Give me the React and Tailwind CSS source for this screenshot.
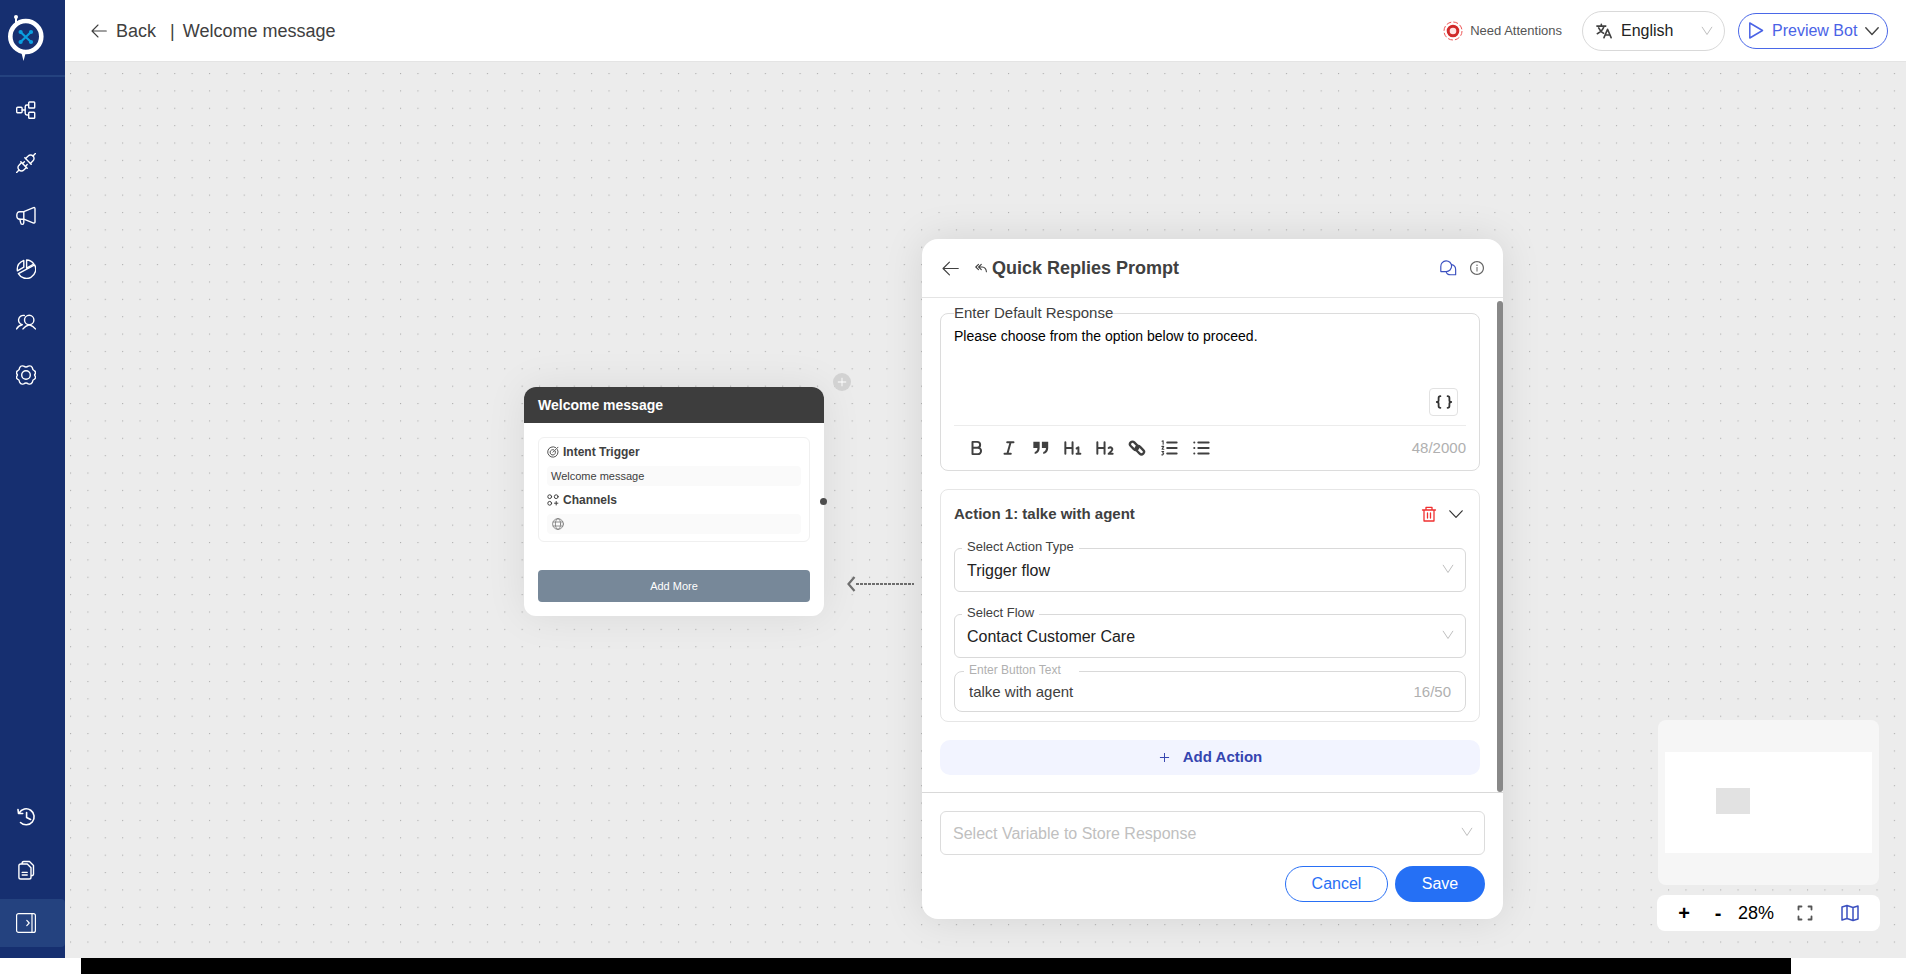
import { AiOutlineInfoCircle, AiOutlinePlus } from "react-icons/ai";

const stroke = {
    fill: "none",
    stroke: "currentColor",
    strokeLinecap: "round",
    strokeLinejoin: "round",
};

function Icon({ size = 20, width = 1.3, box = "0 0 20 20", className, children }) {
    return (
        <svg
            {...stroke}
            width={size}
            height={size}
            viewBox={box}
            strokeWidth={width}
            className={className}
            aria-hidden="true"
        >
            {children}
        </svg>
    );
}

function BackArrow({ size = 16 }) {
    return (
        <Icon size={size} width={1.1} box="0 0 16 16">
            <path d="M15.300 8H1M7 2L1 8l6 6" />
        </Icon>
    );
}

function Chevron({ size = 14, width = 1.2, className }) {
    return (
        <Icon size={size} width={width} box="0 0 14 14" className={className}>
            <path d="M.8 3.800L7 10.400l6.200-6.600" />
        </Icon>
    );
}

function Caret({ className }) {
    return (
        <svg {...stroke} width="12" height="12" viewBox="0 0 12 12" stroke="#bfbfbf" aria-hidden="true" className={`pointer-events-none ${className}`}>
            <path d="M1.200 2.200L6 9.500l4.800-7.300" />
        </svg>
    );
}

function Logo() {
    return (
        <svg width="36" height="46" viewBox="0 0 36 46" aria-hidden="true">
            <circle cx="8" cy="2" r="2" fill="#fff" />
            <path d="M7 2h2v8H7z" fill="#fff" />
            <path d="M13 35h6l-1.500 3.500-2 7.500-2-8z" fill="#fff" />
            <circle cx="17.800" cy="21.500" r="15.500" fill="#183070" stroke="#fff" strokeWidth="4.600" />
            <path d="M13 17.500l9.500 9M22.500 17.500L13 26.500" stroke="#0a9fe0" strokeWidth="2.200" />
            <g fill="#0a9fe0">
                <circle cx="12.600" cy="17" r="2.100" />
                <circle cx="23" cy="17" r="2.100" />
                <circle cx="12.600" cy="27" r="2.100" />
                <circle cx="23" cy="27" r="2.100" />
            </g>
        </svg>
    );
}

const topNav = [
    {
        label: "Flows",
        art: (
            <>
                <rect x="0.700" y="7.300" width="5.400" height="5.400" rx="1" />
                <rect x="12.700" y="2" width="6" height="6" rx="0.800" />
                <rect x="12.700" y="12.200" width="6" height="6" rx="0.800" />
                <path d="M6.200 10h3M12.500 5h-1.600q-1.700 0-1.700 1.700v6.600q0 1.700 1.700 1.700h1.600" />
            </>
        ),
    },
    {
        label: "Integrations",
        art: (
            <>
                <path d="M.6 19.400l2.400-2.400M19.400.6L17 3M4.800 8.800l6.400 6.400M8.800 4.800l6.400 6.400" />
                <path d="M5.600 9.600L3 12.200a3.300 3.300 0 0 0 0 4.800 3.300 3.300 0 0 0 4.800 0l2.600-2.600M9.600 5.600L12.200 3a3.300 3.300 0 0 1 4.800 0 3.300 3.300 0 0 1 0 4.800l-2.600 2.600" />
                <path d="M6.600 10.600l1.800-1.800M9.400 13.400l1.800-1.800" />
            </>
        ),
    },
    {
        label: "Campaigns",
        art: (
            <>
                <path d="M7.800 5.700l9.200-3.900q2-.8 2 .9v13.200q0 1.700-2 .9l-9.200-3.600H3.800Q.8 13.200.8 9.400t3-3.700z" />
                <path d="M7.800 5.700v10.800q0 1.900-1.500 1.900T4.700 16.800l-.8-3.500" />
            </>
        ),
    },
    {
        label: "Analytics",
        art: (
            <>
                <path d="M7.800 1.400v6.800L1.400 11.800Q.4 4.500 7.800 1.400z" />
                <path d="M10.600 1v8.200l7.200-4.200A9 9 0 0 0 10.600 1z" />
                <path d="M2.400 14.600l16.200-8.800a9 9 0 1 1-16.200 8.800z" />
            </>
        ),
    },
    {
        label: "Contacts",
        art: (
            <>
                <circle cx="13.200" cy="8" r="4.700" />
                <path d="M7 16.900q2.300-3.200 6.200-4.200 3.900 1 6.200 4.200M8.300 3.500a4.700 4.700 0 1 0-2 9.200Q2.500 13.500.6 16.900" />
            </>
        ),
    },
    {
        label: "Settings",
        art: (
            <>
                <circle cx="10" cy="10" r="4.300" />
                <path d="M7.700 1.200q2.300 1.500 4.600 0 2.800-1 4 1.400.3 2.800 2.200 3.300 1.900 1.600.4 3.400-.6.700 0 1.400 1.500 1.800-.4 3.400-1.900.5-2.200 3.300-1.200 2.400-4 1.400-2.300-1.500-4.600 0-2.800 1-4-1.400-.3-2.800-2.200-3.300-1.900-1.600-.4-3.400.6-.7 0-1.400Q-.4 7.500 1.500 5.900q1.900-.5 2.200-3.300 1.200-2.400 4-1.400z" />
            </>
        ),
    },
];

function NavButton({ label, children, className = "h-[53px]" }) {
    return (
        <button
            type="button"
            aria-label={label}
            className={`flex w-full items-center pl-4 text-white ${className}`}
        >
            {children}
        </button>
    );
}

function Sidebar() {
    return (
        <nav className="flex w-[65px] shrink-0 flex-col bg-[#162f70] pb-[11px]">
            <a href="#home" aria-label="Home" className="flex h-[77px] items-start border-b-2 border-[#24427f] pl-2 pt-[15px]">
                <Logo />
            </a>
            <div className="mt-[6px]">
                {topNav.map((item) => (
                    <NavButton key={item.label} label={item.label}>
                        <Icon width={1.4}>{item.art}</Icon>
                    </NavButton>
                ))}
            </div>
            <div className="mt-auto">
                <NavButton label="History">
                    <Icon width={1.6}>
                        <path d="M4.500 15.500a8 8 0 1 0-1.300-9.700M2 2.600l.5 3.900h4.200M10.600 5.500v5l4 2" />
                    </Icon>
                </NavButton>
                <NavButton label="Documents">
                    <Icon width={1.4}>
                        <path d="M4.700 4h6.600l3.700 3.700v9.500q0 1.800-1.800 1.800H4.700q-1.800 0-1.800-1.800V5.800Q2.900 4 4.700 4zM6 3.800q0-2.300 1.800-2.300h5.700l4 4V14q0 1.700-2.200 1.700M6.200 12.400h5M6.200 15h5" />
                    </Icon>
                </NavButton>
                <NavButton label="Expand menu" className="mt-[3px] h-12 rounded-r-sm bg-[#24427f]">
                    <Icon width={1.2}>
                        <rect x="0.600" y="0.600" width="18.800" height="18.800" rx="2" />
                        <path d="M16 .6v18.800M10.800 7.400l2.400 2.600-2.400 2.600" />
                    </Icon>
                </NavButton>
            </div>
        </nav>
    );
}

function Header() {
    return (
        <header className="flex h-[62px] shrink-0 items-center border-b border-[#e4e4e4] bg-white pl-[26px] pr-[18px] text-[#404040]">
            <a href="#back" className="flex items-center gap-[9px] text-lg">
                <BackArrow />
                Back
            </a>
            <span className="ml-[14px] text-lg">|</span>
            <h1 className="ml-2 text-lg">Welcome message</h1>

            <div className="ml-auto flex items-center">
                <svg width="20" height="20" viewBox="0 0 20 20" aria-hidden="true">
                    <circle cx="10" cy="10" r="9" fill="none" stroke="#ee5555" strokeWidth="1" strokeDasharray="5 2.070" />
                    <circle cx="10" cy="10" r="4.800" fill="#ffe3e3" stroke="#d02a2a" strokeWidth="3" />
                </svg>
                <span className="ml-[7px] text-[13px] text-[#555]">Need Attentions</span>
                <div className="relative ml-5 h-10 w-[143px] text-[#222]">
                    <Icon size={16} width={1.8} box="0 0 18 18" className="absolute left-[14px] top-3 text-[#404040]">
                        <path d="M1 3.500h10M6 1.500v2M9 3.700Q7.500 9 1.500 12M3 5.500q2 4.500 5.500 6M9 16.500l4-9.500 4 9.500M10.500 13.500h5" />
                    </Icon>
                    <select
                        aria-label="Language"
                        className="h-full w-full appearance-none rounded-full border border-[#d9d9d9] pl-[38px] text-base"
                    >
                        <option>English</option>
                    </select>
                    <Caret className="absolute right-3 top-[14px]" />
                </div>
                <button
                    type="button"
                    className="ml-[13px] flex h-9 w-[150px] items-center rounded-full border border-[#4a68e8] pl-[9px] text-base text-[#4a63e6]"
                >
                    <Icon size={17} width={1.5} box="0 0 17 17">
                        <path d="M1.800 1v15l12.700-7.500z" />
                    </Icon>
                    <span className="ml-[7px]">Preview Bot</span>
                    <Chevron width={1.4} className="ml-2 text-[#444]" />
                </button>
            </div>
        </header>
    );
}

function Dots() {
    return (
        <svg className="absolute inset-0 h-full w-full" aria-hidden="true">
            <defs>
                <pattern id="dots" x="5" y="11" width="17.370" height="17.370" patternUnits="userSpaceOnUse">
                    <circle cx="0.600" cy="0.600" r="0.600" fill="#a0a0a0" />
                </pattern>
            </defs>
            <rect width="100%" height="100%" fill="url(#dots)" />
        </svg>
    );
}

function WelcomeNode() {
    return (
        <section className="absolute left-[459px] top-[325px] w-[300px] rounded-xl bg-white shadow-[0_0_40px_rgba(0,0,0,0.08)]">
            <h2 className="flex h-9 items-center rounded-t-xl bg-[#3d3d3d] px-[14px] text-sm font-bold text-white">
                Welcome message
            </h2>
            <div className="p-[14px]">
                <div className="rounded-md border border-[#f0f0f0] px-2 pb-[7px] pt-1 text-[#404040]">
                    <h3 className="flex h-5 items-center gap-1 text-xs font-bold">
                        <Icon size={12} width={0.9} box="0 0 12 12">
                            <path d="M8.600 1.500a5.200 5.200 0 1 0 2 2.200M6.800 3.800a2.700 2.700 0 1 0 1.500 1.500M6 6.200l5-5" />
                        </Icon>
                        Intent Trigger
                    </h3>
                    <p className="my-1 h-5 rounded bg-[#fafafa] px-1 text-[11px]/5">Welcome message</p>
                    <h3 className="flex h-5 items-center gap-1 text-xs font-bold">
                        <Icon size={12} width={1} box="0 0 12 12">
                            <circle cx="2.700" cy="2.700" r="1.900" />
                            <circle cx="9.200" cy="2.700" r="1.900" />
                            <circle cx="2.700" cy="9.300" r="1.900" />
                            <path d="M9.200 7.500v3.500M7.500 9.200h3.400" />
                        </Icon>
                        Channels
                    </h3>
                    <p className="mt-1 flex h-5 items-center rounded bg-[#fafafa] px-[5px] text-[#777]">
                        <Icon size={12} width={0.8} box="0 0 12 12">
                            <circle cx="6" cy="6" r="5.400" />
                            <ellipse cx="6" cy="6" rx="2.600" ry="5.400" />
                            <path d="M1.200 4h9.600M1.200 8h9.600" />
                        </Icon>
                    </p>
                </div>
                <button type="button" className="mt-7 h-8 w-full rounded bg-[#778899] text-[11px] text-white">
                    Add More
                </button>
            </div>
            <span className="absolute -right-[3px] top-[111px] size-[7px] rounded-full bg-[#4d4d4d]" />
        </section>
    );
}

function FieldLabel({ htmlFor, className, children }) {
    return (
        <label htmlFor={htmlFor} className={`absolute bg-white ${className}`}>
            {children}
        </label>
    );
}

function SelectField({ id, label, value }) {
    return (
        <div className="relative">
            <FieldLabel htmlFor={id} className="-top-[9px] left-2 px-[5px] text-[13px]/4 text-[#404040]">
                {label}
            </FieldLabel>
            <select id={id} className="h-11 w-full appearance-none rounded-md border border-[#d9d9d9] px-3 pt-px text-base text-[#222]">
                <option>{value}</option>
            </select>
            <Caret className="absolute right-3 top-[15px]" />
        </div>
    );
}

const tools = [
    {
        label: "Bold",
        art: <path d="M5 3.200h5.200a3.300 3.300 0 0 1 0 6.600H5zM5 9.800h6a3.500 3.500 0 0 1 0 7H5z" />,
    },
    { label: "Italic", art: <path d="M8 3.500h7M5 16.500h7M11.800 3.500l-3.600 13" /> },
    {
        label: "Quote",
        art: (
            <g fill="currentColor" stroke="none">
                <path d="M1.500 3h7v7Q8.500 15.500 3 16.700v-2.200Q6 13.500 6 10H1.500zM11 3h7v7q0 5.500-5.500 6.700v-2.200q3-1 3-4.500h-4.500z" />
            </g>
        ),
    },
    {
        label: "Heading 1",
        art: <path d="M1.500 3.500v13M9.500 3.500v13M1.500 10h8M14 10.500l2-1.300v7.300M14 16.500h4.200" />,
    },
    {
        label: "Heading 2",
        art: <path d="M1.500 3.500v13M9.500 3.500v13M1.500 10h8M14 10q2-1.400 3.500 0t-.5 3.500l-3 3h4.500" />,
    },
    {
        label: "Link",
        art: (
            <g strokeWidth="2.600">
                <rect x="1.500" y="4.700" width="10.500" height="5.600" rx="2.800" transform="rotate(45 6.700 7.500)" />
                <rect x="8" y="9.700" width="10.500" height="5.600" rx="2.800" transform="rotate(45 13.200 12.500)" />
            </g>
        ),
    },
    {
        label: "Numbered list",
        art: (
            <>
                <path d="M8 4h10.500M8 10h10.500M8 16h10.500" />
                <path strokeWidth="1.200" d="M2.300 2.500l1.200-.6v3.800M2.100 8.200h2L2.300 11.300h2M2.100 13.900h2l-1.100 1.500 1.100 1-1.100 1.200h-1" />
            </>
        ),
    },
    {
        label: "Bulleted list",
        art: <path d="M7 4h11.500M7 10h11.500M7 16h11.500M2.500 4h.1M2.500 10h.1M2.500 16h.1" />,
    },
];

function ResponseEditor() {
    return (
        <div className="relative rounded-lg border border-[#dcdcdc] px-[13px] pt-3">
            <FieldLabel htmlFor="response" className="-top-[11px] left-[13px] text-[15px]/5 text-[#404040]">
                Enter Default Response
            </FieldLabel>
            <textarea
                id="response"
                defaultValue="Please choose from the option below to proceed."
                className="block h-[99px] w-full resize-none text-sm/5 text-black outline-none"
            />
            <button
                type="button"
                aria-label="Insert variable"
                className="absolute right-[21px] top-[74px] flex h-7 w-[29px] items-center justify-center rounded border border-[#e2e2e2] bg-white text-[#333]"
            >
                <Icon size={18} width={2}>
                    <path d="M6 3.500q-2 0-2 2V8q0 2-2 2 2 0 2 2v2.500q0 2 2 2M14 3.500q2 0 2 2V8q0 2 2 2-2 0-2 2v2.500q0 2-2 2" />
                </Icon>
            </button>
            <div className="flex h-[45px] items-center border-t border-[#ececec] pl-[14px] text-[#404040]">
                <div className="flex gap-[14px]">
                    {tools.map((tool) => (
                        <button key={tool.label} type="button" aria-label={tool.label}>
                            <Icon size={18} width={2.2}>{tool.art}</Icon>
                        </button>
                    ))}
                </div>
                <span className="ml-auto text-[15px] text-[#b0b0b0]">48/2000</span>
            </div>
        </div>
    );
}

function ActionCard() {
    return (
        <div className="mt-[18px] rounded-lg border border-[#e6e6e6] px-[13px] pb-[9px]">
            <div className="flex h-12 items-center pr-[3px]">
                <h3 className="flex-1 text-[15px] font-bold text-[#404040]">Action 1: talke with agent</h3>
                <button type="button" aria-label="Delete action" className="text-[#f03030]">
                    <Icon size={16} width={1.3} box="0 0 16 16">
                        <path d="M1.500 4h13M5 4V1.300h6V4M3 4v11h10V4M6.500 7v5M9.500 7v5" />
                    </Icon>
                </button>
                <button type="button" aria-label="Collapse action" className="ml-3 text-[#333]">
                    <Chevron />
                </button>
            </div>
            <div className="mt-[10px] flex flex-col gap-[22px]">
                <SelectField id="action-type" label="Select Action Type" value="Trigger flow" />
                <SelectField id="flow" label="Select Flow" value="Contact Customer Care" />
            </div>
            <div className="relative mt-[13px]">
                <FieldLabel htmlFor="button-text" className="-top-[9px] left-[10px] w-[115px] px-[5px] text-xs/4 text-[#b0b0b0]">
                    Enter Button Text
                </FieldLabel>
                <input
                    id="button-text"
                    defaultValue="talke with agent"
                    className="h-[41px] w-full rounded-lg border border-[#d9d9d9] px-[14px] text-[15px] text-[#404040]"
                />
                <span className="absolute right-[15px] top-[11px] text-[15px]/5 text-[#b0b0b0]">16/50</span>
            </div>
        </div>
    );
}

function PromptPanel() {
    return (
        <section className="absolute left-[857px] top-[177px] w-[581px] rounded-2xl bg-white shadow-[0_0_40px_rgba(0,0,0,0.1)]">
            <div className="flex h-[59px] items-center border-b border-[#e4e4e4] pl-5 pr-[18px] text-[#404040]">
                <button type="button" aria-label="Back">
                    <BackArrow size={17} />
                </button>
                <Icon size={12} width={1.1} box="0 0 12 12" className="ml-4">
                    <path d="M3.500 2.300L.8 5l2.700 2.700M6.300 2.300L3.600 5l2.700 2.700M3.800 5h3.400q3.800.3 4.200 4.800" />
                </Icon>
                <h2 className="ml-[5px] flex-1 text-lg font-bold">Quick Replies Prompt</h2>
                <button type="button" aria-label="Conversation" className="text-[#3b50c0]">
                    <Icon size={18} width={1.3}>
                        <path d="M2 13.800V8.300a6 6 0 1 1 6 5.700H2.200zM14.200 6.300q4.300 1 4.300 5.700v5.500h-5.500q-4.500 0-5-3.500" />
                    </Icon>
                </button>
                <button type="button" aria-label="Info" className="ml-3 text-[#666]">
                    <AiOutlineInfoCircle size={16} />
                </button>
            </div>

            <div className="relative border-b border-[#d9d9d9] pb-[17px] pl-[18px] pr-[23px] pt-[15px]">
                <ResponseEditor />
                <ActionCard />
                <button
                    type="button"
                    className="mt-[18px] flex h-[35px] w-full items-center justify-center gap-3 rounded-[10px] bg-[#f2f4ff] text-[15px] font-bold text-[#3545b0]"
                >
                    <AiOutlinePlus size={13} />
                    Add Action
                </button>
                <span className="absolute bottom-0 right-0 top-[3px] w-[6px] rounded-full bg-[#888]" />
            </div>

            <div className="px-[18px] pb-[17px] pt-[18px]">
                <div className="relative">
                    <select
                        aria-label="Select Variable to Store Response"
                        className="h-11 w-full appearance-none rounded-md border border-[#dcdcdc] px-3 pt-px text-base text-[#c0c0c0]"
                    >
                        <option>Select Variable to Store Response</option>
                    </select>
                    <Caret className="absolute right-3 top-[15px]" />
                </div>
                <div className="mt-[11px] flex justify-end gap-[7px] text-base">
                    <button type="button" className="h-9 w-[103px] rounded-full border border-[#2970f5] text-[#2970f5]">
                        Cancel
                    </button>
                    <button type="button" className="h-9 w-[90px] rounded-full bg-[#2570f5] text-white">
                        Save
                    </button>
                </div>
            </div>
        </section>
    );
}

function MapControls() {
    return (
        <div className="absolute bottom-[27px] right-[26px] w-[223px]">
            <div className="mx-px mb-[10px] h-[165px] rounded-lg bg-[#f6f6f6] px-[7px] py-8">
                <svg width="100%" height="101" viewBox="0 0 207 101" aria-hidden="true">
                    <rect width="207" height="101" fill="#fff" />
                    <rect x="51" y="36" width="34" height="26" fill="#e2e2e2" />
                </svg>
            </div>
            <div className="flex h-9 items-center rounded-lg bg-white pl-5 pr-[21px] text-black">
                <button type="button" aria-label="Zoom in" className="w-[14px] text-xl font-bold">+</button>
                <button type="button" aria-label="Zoom out" className="ml-5 w-[14px] text-xl font-bold">-</button>
                <span className="ml-[13px] text-lg">28%</span>
                <button type="button" aria-label="Fit view" className="ml-auto text-[#555]">
                    <Icon size={16} width={1.8} box="0 0 16 16">
                        <path d="M1.500 4.500v-3h3M11.500 1.500h3v3M14.500 11.500v3h-3M4.500 14.500h-3v-3" />
                    </Icon>
                </button>
                <button type="button" aria-label="Toggle map" className="ml-7 text-[#3b50c0]">
                    <Icon size={18} width={1.5} box="0 0 18 18">
                        <path d="M1 3l5-1.500L12 3.500l5-1.500v13l-5 1.500L6 14.500 1 16zM6 1.500v13M12 3.500v13" />
                    </Icon>
                </button>
            </div>
        </div>
    );
}

export default function App() {
    return (
        <div className="flex h-screen flex-col bg-white font-['Liberation_Sans',Arial,sans-serif]">
            <div className="flex min-h-0 flex-1">
                <Sidebar />
                <div className="flex min-w-0 flex-1 flex-col">
                    <Header />
                    <main className="relative flex-1 overflow-hidden bg-[#ececec]">
                        <Dots />
                        <WelcomeNode />
                        <button
                            type="button"
                            aria-label="Add step"
                            className="absolute left-[768px] top-[311px] flex size-[18px] items-center justify-center rounded-full bg-[#d2d2d2] text-white"
                        >
                            <AiOutlinePlus size={12} />
                        </button>
                        <svg className="absolute left-[782px] top-[514px]" width="67" height="16" fill="none" stroke="#6e6e6e" aria-hidden="true">
                            <path d="M7.500 1L1.500 8l6 7" strokeWidth="2.200" />
                            <path d="M9 8h58" strokeWidth="2" strokeDasharray="3 1" />
                        </svg>
                        <PromptPanel />
                        <MapControls />
                    </main>
                </div>
            </div>
            {/* Bottom strip */}
            <div className="h-4 shrink-0 pl-[81px] pr-[115px]">
                <div className="h-full bg-black" />
            </div>
        </div>
    );
}
